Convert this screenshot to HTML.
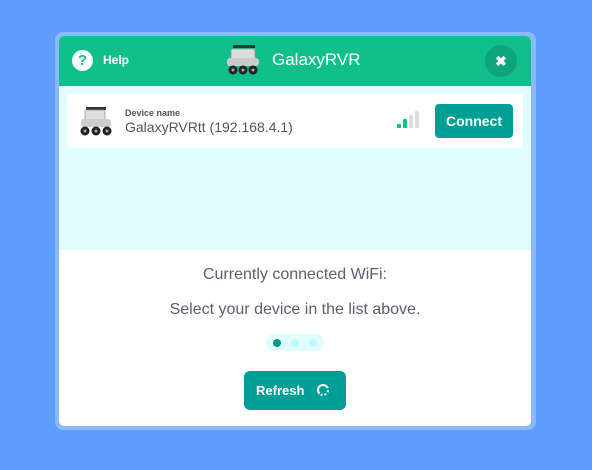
<!DOCTYPE html>
<html><head><style>
*{margin:0;padding:0;box-sizing:border-box}
body{width:592px;height:470px;background:#5f9dfd;font-family:"Liberation Sans",sans-serif;position:relative;overflow:hidden}
.m{position:absolute;left:55px;top:32px;width:481px;height:398px;background:#8ab9ff;border-radius:8px}
.in{position:absolute;left:59px;top:36px;width:472px;height:390px;background:#fff;border-radius:5px;overflow:hidden}
.hd{position:absolute;left:0;top:0;width:472px;height:50px;background:#11bf8c}
.cy{position:absolute;left:0;top:50px;width:472px;height:164px;background:#e1feff}
.card{position:absolute;left:8px;top:58px;width:456px;height:54px;background:#fff;border-radius:4px}
.t{position:absolute;white-space:nowrap}
</style></head><body>
<div class="m"></div>
<div class="in">
<div class="hd">
 <div class="t" style="left:13px;top:14px;width:21px;height:21px;border-radius:50%;background:#fff;color:#11bf8c;font-weight:bold;font-size:15px;text-align:center;line-height:21px">?</div>
 <div class="t" style="left:44px;top:17px;color:#fff;font-weight:bold;font-size:12px">Help</div>
 <svg class="t" style="left:166px;top:8px" width="36" height="32" viewBox="0 0 36 32"><rect x="8" y="1" width="22" height="3" fill="#333"/><rect x="6" y="5" width="24" height="14" rx="2" fill="#ddd" stroke="#999" stroke-width=".8"/><rect x="2" y="14" width="32" height="8" rx="3" fill="#ccc"/><circle cx="8" cy="26" r="4.5" fill="#222"/><circle cx="18" cy="26" r="4.5" fill="#222"/><circle cx="28" cy="26" r="4.5" fill="#222"/><circle cx="8" cy="26" r="1.5" fill="#aaa"/><circle cx="18" cy="26" r="1.5" fill="#aaa"/><circle cx="28" cy="26" r="1.5" fill="#aaa"/></svg>
 <div class="t" style="left:213px;top:14px;color:#fff;font-size:17px">GalaxyRVR</div>
 <div class="t" style="left:426px;top:9px;width:32px;height:32px;border-radius:50%;background:#0fa57c;color:#fff;font-weight:bold;font-size:14px;text-align:center;line-height:32px">✖</div>
</div>
<div class="cy"></div>
<div class="card">
 <svg class="t" style="left:11px;top:12px" width="36" height="30" viewBox="0 0 36 30"><rect x="8" y="1" width="20" height="3" fill="#333"/><rect x="7" y="4" width="20" height="14" rx="2" fill="#ddd" stroke="#999" stroke-width=".8"/><rect x="3" y="13" width="30" height="8" rx="3" fill="#ccc"/><circle cx="7" cy="25" r="4.5" fill="#222"/><circle cx="18" cy="25" r="4.5" fill="#222"/><circle cx="29" cy="25" r="4.5" fill="#222"/><circle cx="7" cy="25" r="1.5" fill="#aaa"/><circle cx="18" cy="25" r="1.5" fill="#aaa"/><circle cx="29" cy="25" r="1.5" fill="#aaa"/></svg>
 <div class="t" style="left:58px;top:14px;font-size:9px;font-weight:bold;color:#555">Device name</div>
 <div class="t" style="left:58px;top:25px;font-size:14px;color:#555">GalaxyRVRtt (192.168.4.1)</div>
 <div class="t" style="left:330px;top:30px;width:4px;height:4px;background:#11bf8c;border-radius:1px"></div>
 <div class="t" style="left:336px;top:25px;width:4px;height:9px;background:#11bf8c;border-radius:1px"></div>
 <div class="t" style="left:342px;top:21px;width:4px;height:13px;background:#ddd;border-radius:1px"></div>
 <div class="t" style="left:348px;top:17px;width:4px;height:17px;background:#ddd;border-radius:1px"></div>
 <div class="t" style="left:368px;top:10px;width:78px;height:34px;background:#009f95;border-radius:4px;color:#fff;font-weight:bold;font-size:14px;text-align:center;line-height:34px">Connect</div>
</div>
<div class="t" style="left:0;width:472px;top:230px;text-align:center;font-size:16px;color:#5a6070">Currently connected WiFi:</div>
<div class="t" style="left:0;width:472px;top:265px;text-align:center;font-size:16px;color:#5a6070">Select your device in the list above.</div>
<div class="t" style="left:207px;top:298px;width:58px;height:17px;background:#e1feff;border-radius:9px"></div>
<div class="t" style="left:214px;top:303px;width:8px;height:8px;background:#00968a;border-radius:50%"></div>
<div class="t" style="left:232px;top:303px;width:8px;height:8px;background:#b9fbff;border-radius:50%"></div>
<div class="t" style="left:250px;top:303px;width:8px;height:8px;background:#b9fbff;border-radius:50%"></div>
<div class="t" style="left:185px;top:335px;width:102px;height:39px;background:#009f95;border-radius:6px;color:#fff;font-weight:bold;font-size:13px;line-height:39px;padding-left:12px">Refresh <span style="position:absolute;left:73px;top:13px;width:12px;height:12px;border:2px dotted #fff;border-top-style:solid;border-left-style:solid;border-radius:50%"></span></div>
</div>
</body></html>
